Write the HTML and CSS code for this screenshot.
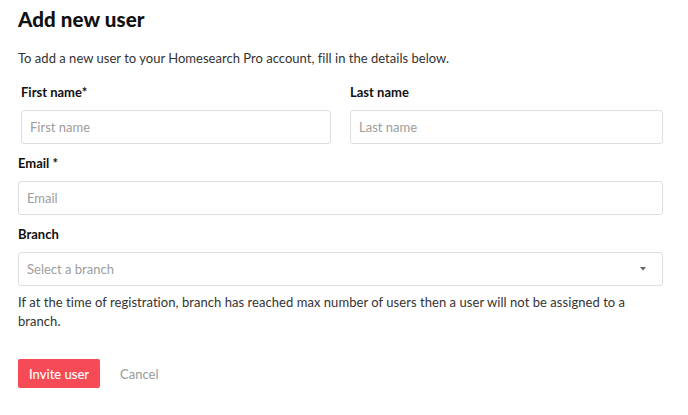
FILE: index.html
```html
<!DOCTYPE html>
<html>
<head>
<meta charset="utf-8">
<link rel="stylesheet" href="styles.css">
</head>
<body>
<div class="page">
  <h1 class="title">Add new user</h1>
  <p class="intro">To add a new user to your Homesearch Pro account, fill in the details below.</p>
  <div class="name-row">
    <div class="field">
      <label class="label">First name*</label>
      <div class="input"><span class="ph">First name</span></div>
    </div>
    <div class="field">
      <label class="label">Last name</label>
      <div class="input"><span class="ph">Last name</span></div>
    </div>
  </div>
  <div class="field block">
    <label class="label">Email *</label>
    <div class="input"><span class="ph">Email</span></div>
  </div>
  <div class="field block">
    <label class="label">Branch</label>
    <div class="input select"><span class="ph">Select a branch</span>
      <svg class="caret" width="6" height="4" viewBox="0 0 6 4"><path d="M0 0h6L3 3.5z" fill="#666"/></svg>
    </div>
  </div>
  <p class="help">If at the time of registration, branch has reached max number of users then a user will not be assigned to a branch.</p>
  <div class="actions">
    <button class="btn-primary">Invite user</button>
    <button class="btn-link">Cancel</button>
  </div>
</div>
</body>
</html>
```
FILE: styles.css
```css
* { box-sizing: border-box; }
html, body { margin: 0; padding: 0; background: #fff; }
body { font-family: Lato, "Open Sans", sans-serif; color: #222; }
.page { padding: 5px 25px 0 18px; }
.title { margin: 0; font-size: 20.5px; font-weight: 900; line-height: 28px; color: #111; letter-spacing: 0.1px; }
.intro { margin: 15px 0 0; font-size: 13px; line-height: 20px; color: #333; letter-spacing: 0.02px; }
.name-row { display: grid; grid-template-columns: 310px 313px; column-gap: 19px; padding-left: 3px; margin-top: 15px; }
.field { display: flex; flex-direction: column; }
.label { font-size: 13px; font-weight: 700; line-height: 18px; color: #111; margin-bottom: 9px; }
.block { margin-top: 10px; }
.input { height: 34px; border: 1px solid #dedede; border-radius: 3px; display: flex; align-items: center; padding: 0 8px; }
.ph { font-size: 13px; color: #9d9d9d; }
.select { justify-content: space-between; padding-right: 16px; }
.caret { display: block; }
.help { margin: 7px 0 0; font-size: 13px; line-height: 19px; color: #333; letter-spacing: 0.05px; }
.actions { display: flex; align-items: center; margin-top: 28px; gap: 20px; }
.btn-primary { font-family: inherit; font-size: 13px; font-weight: 500; color: #fff; background: #f64a57; border: 0; border-radius: 2px; height: 29px; padding: 0 11px 0 11px; }
.btn-link { font-family: inherit; font-size: 13px; color: #999; background: none; border: 0; padding: 0; }
```
